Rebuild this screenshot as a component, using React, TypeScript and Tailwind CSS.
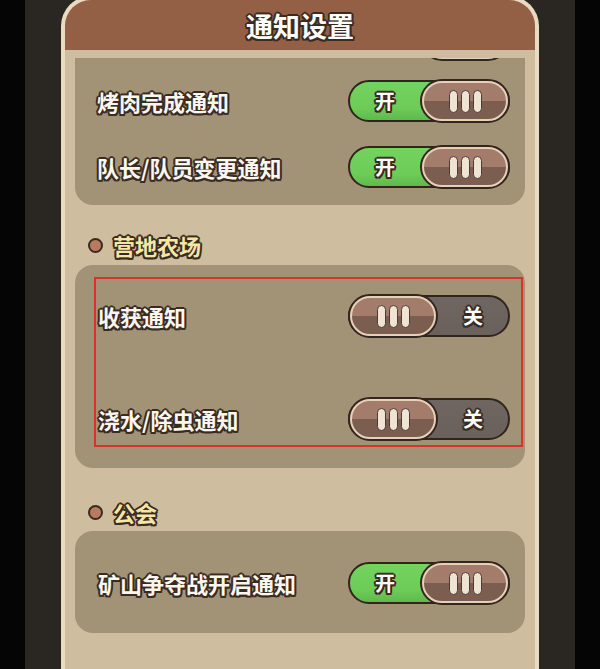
import clsx from "clsx";

const outline =
  "[text-shadow:2px_0_0_#3a2b21,-2px_0_0_#3a2b21,0_2px_0_#3a2b21,0_-2px_0_#3a2b21,1.5px_1.5px_0_#3a2b21,-1.5px_1.5px_0_#3a2b21,1.5px_-1.5px_0_#3a2b21,-1.5px_-1.5px_0_#3a2b21]";

function KnobShape() {
  return (
    <div className="h-[44px] w-[90px] shrink-0 rounded-full border-2 border-[#33261e] bg-[#e6d0b9] p-[2px]">
      <div className="h-full w-full rounded-full bg-[linear-gradient(to_bottom,#a37c6c_0%,#a37c6c_50%,#7b5e50_50%,#7b5e50_100%)] flex items-center justify-center gap-[3px]">
        <span className="h-[23px] w-[9px] rounded-full border-[1.5px] border-[#4a3a30] bg-[#efe3d3]" />
        <span className="h-[23px] w-[9px] rounded-full border-[1.5px] border-[#4a3a30] bg-[#efe3d3]" />
        <span className="h-[23px] w-[9px] rounded-full border-[1.5px] border-[#4a3a30] bg-[#efe3d3]" />
      </div>
    </div>
  );
}

function Toggle({ on }: { on: boolean }) {
  return (
    <div
      className={clsx(
        "h-[42px] w-[162px] shrink-0 rounded-full border-2 border-[#30251e] flex items-center",
        on
          ? "flex-row bg-[linear-gradient(to_bottom,#74d25e_0%,#6dcb57_70%,#5fb94c_100%)]"
          : "flex-row-reverse bg-[linear-gradient(to_bottom,#6f6661_0%,#6a615c_100%)]"
      )}
    >
      <span
        className={clsx(
          "flex-1 text-center text-[20px] font-bold leading-none text-white",
          outline
        )}
      >
        {on ? "开" : "关"}
      </span>
      <div className={clsx("-my-[3px]", on ? "-mr-[2px]" : "-ml-[2px]")}>
        <KnobShape />
      </div>
    </div>
  );
}

function Row({ label, on, className }: { label: string; on: boolean; className?: string }) {
  return (
    <div className={clsx("flex h-[42px] items-center justify-between", className)}>
      <span className={clsx("text-[22px] font-bold leading-none text-[#fbf7f0]", outline)}>{label}</span>
      <Toggle on={on} />
    </div>
  );
}

function SectionTitle({ title, className }: { title: string; className?: string }) {
  return (
    <div className={clsx("ml-[13px] flex h-[28px] items-center gap-[10px]", className)}>
      <span className="h-[15px] w-[15px] rounded-full border-2 border-[#3a2a20] bg-[#b87b60]" />
      <span className={clsx("text-[22px] font-bold leading-none text-[#f5e6a6]", outline)}>{title}</span>
    </div>
  );
}

export default function App() {
  return (
    <div className="flex h-[669px] w-[600px] justify-center overflow-hidden bg-[#050505] font-['Noto_Sans_CJK_SC','Noto_Sans',sans-serif]">
      <div className="flex h-full w-[550px] justify-center bg-[#2a2622]">
        <div className="-mt-[4px] flex h-[673px] w-[478px] flex-col overflow-hidden rounded-t-[30px] border-4 border-b-0 border-[#e9dbc1] bg-[#cfbd9f]">
          <div className="flex h-[50px] shrink-0 items-center justify-center bg-[#935f45]">
            <span className={clsx("text-[27px] font-bold leading-none text-white", outline)}>通知设置</span>
          </div>

          <div className="mt-[8px] flex-1 overflow-hidden px-[10px]">
            <div className="rounded-b-[18px] bg-[#a29377] pb-[17px] pl-[22px] pr-[15px]">
              {/* bottom edge of the row scrolled out above */}
              <div className="flex h-[3px] items-end justify-end overflow-hidden">
                <KnobShape />
              </div>
              <Row label="烤肉完成通知" on={true} className="mt-[19px]" />
              <Row label="队长/队员变更通知" on={true} className="mt-[24px]" />
            </div>

            <SectionTitle title="营地农场" className="mt-[26px] mb-[6px]" />
            <div className="rounded-[18px] bg-[#a29377] pb-[21px] pt-[12px] pl-[19px] pr-[2px]">
              <div className="border-2 border-[#dc3128] pb-[5px] pl-[2px] pr-[11px] pt-[16px]">
                <Row label="收获通知" on={false} />
                <Row label="浇水/除虫通知" on={false} className="mt-[61px]" />
              </div>
            </div>

            <SectionTitle title="公会" className="mt-[30px] mb-[5px]" />
            <div className="rounded-[18px] bg-[#a29377] pb-[29px] pl-[23px] pr-[15px] pt-[31px]">
              <Row label="矿山争夺战开启通知" on={true} />
            </div>
          </div>
        </div>
      </div>
    </div>
  );
}
